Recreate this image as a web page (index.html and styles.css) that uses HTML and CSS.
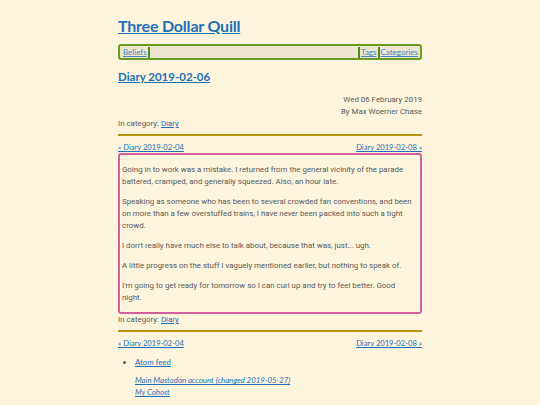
FILE: index.html
```html
<!DOCTYPE html>
<html>
<head>
<meta charset="utf-8">
<link rel="stylesheet" href="styles.css">
</head>
<body>
<div class="page">
  <h1 class="site-title"><a href="#">Three Dollar Quill</a></h1>
  <nav class="nav">
    <a href="#">Beliefs</a><span class="sep"></span>
    <span class="fill"></span>
    <span class="sep"></span><a href="#">Tags</a><span class="sep"></span><a href="#">Categories</a>
  </nav>
  <h2 class="post-title"><a href="#">Diary 2019-02-06</a></h2>
  <div class="meta">
    <div>Wed 06 February 2019</div>
    <div>By Max Woerner Chase</div>
  </div>
  <div class="category">In category: <a href="#">Diary</a></div>
  <div class="rule"></div>
  <div class="pager"><a href="#">« Diary 2019-02-04</a><a href="#">Diary 2019-02-08 »</a></div>
  <article class="entry">
    <p>Going in to work was a mistake. I returned from the general vicinity of the parade battered, cramped, and generally squeezed. Also, an hour late.</p>
    <p>Speaking as someone who has been to several crowded fan conventions, and been on more than a few overstuffed trains, I have <em>never</em> been packed into such a tight crowd.</p>
    <p>I don't really have much else to talk about, because that was, just... ugh.</p>
    <p>A little progress on the stuff I vaguely mentioned earlier, but nothing to speak of.</p>
    <p>I'm going to get ready for tomorrow so I can curl up and try to feel better. Good night.</p>
  </article>
  <div class="category after">In category: <a href="#">Diary</a></div>
  <div class="rule"></div>
  <div class="pager"><a href="#">« Diary 2019-02-04</a><a href="#">Diary 2019-02-08 »</a></div>
  <ul class="feeds"><li><a href="#">Atom feed</a></li></ul>
  <div class="social">
    <a href="#">Main Mastodon account (changed 2019-05-27)</a>
    <a href="#">My Cohost</a>
  </div>
</div>
</body>
</html>
```
FILE: styles.css
```css
html, body {
  margin: 0;
  padding: 0;
  background: #fcf4dc;
}
body {
  font-family: Roboto, sans-serif;
  color: #5a5a5a;
}
a { color: #1f70b8; }
.page {
  width: 304px;
  margin: 0 auto;
  padding-top: 14px;
}
.site-title {
  margin: 0;
  font-family: Lato, sans-serif;
  font-size: 16px;
  font-weight: 700;
  line-height: 24px;
  letter-spacing: -0.2px;
}
.nav {
  margin-top: 6px;
  display: flex;
  align-items: center;
  height: 12px;
  border: 2px solid #6b9a22;
  border-radius: 3px;
  background: #ece5d0;
  padding: 0 1px 0 2px;
  font-family: Lato, sans-serif;
  font-size: 8px;
  line-height: 12px;
}
.nav a { color: #4a86c4; padding: 0 1px; }
.nav .sep {
  width: 2px;
  height: 11px;
  background: #4d8a16;
}
.nav .fill { flex: 1; }
.post-title {
  margin: 9px 0 0;
  font-family: Lato, sans-serif;
  font-size: 11.5px;
  font-weight: 700;
  line-height: 16px;
}
.meta {
  margin-top: 9px;
  text-align: right;
  font-size: 7.9px;
  line-height: 12px;
}
.category {
  font-size: 7.9px;
  line-height: 12px;
}
.rule {
  height: 2px;
  background: #b8940c;
  margin: 4px 0 5px;
}
.pager {
  display: flex;
  justify-content: space-between;
  font-family: Lato, sans-serif;
  font-size: 7.6px;
  line-height: 12px;
}
.entry {
  border: 2px solid #d2609c;
  border-radius: 3px;
  padding: 1px 6px 0 2px;
  font-size: 7.9px;
  line-height: 12px;
}
.entry p { margin: 8px 0; }
.feeds {
  margin: 7px 0 0;
  padding-left: 17px;
  font-family: Lato, sans-serif;
  font-size: 7.8px;
  line-height: 12px;
}
.social {
  margin-top: 6px;
  padding-left: 17px;
  display: flex;
  flex-direction: column;
  align-items: flex-start;
  font-family: Lato, sans-serif;
  font-style: italic;
  font-size: 7.8px;
  line-height: 12px;
}
```
